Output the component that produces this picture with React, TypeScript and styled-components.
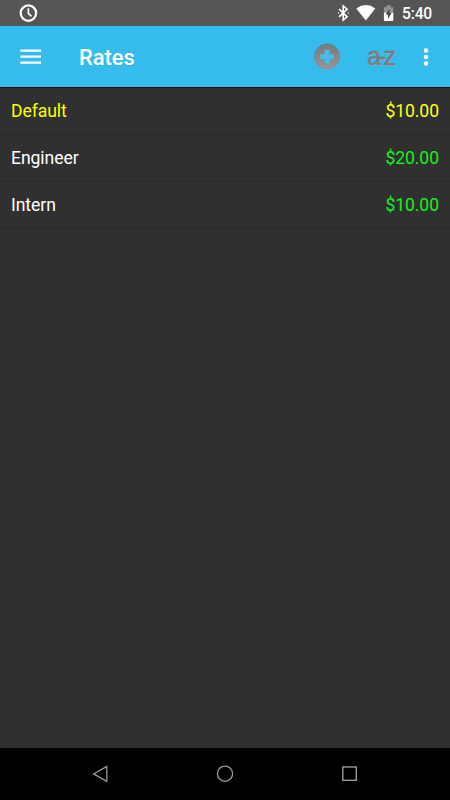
import React from "react";
import styled, { createGlobalStyle } from "styled-components";

const GlobalStyle = createGlobalStyle`
  body { margin: 0; background: #303030; }
  * { box-sizing: border-box; }
  svg { display: block; flex: none; }
`;

const Screen = styled.div`
  display: flex;
  flex-direction: column;
  width: 450px;
  height: 800px;
  background: #303030;
  font-family: Roboto, sans-serif;
  overflow: hidden;
`;

const StatusBar = styled.header`
  display: flex;
  align-items: center;
  justify-content: space-between;
  height: 26px;
  padding: 0 18px 0 19px;
  background: #555555;
`;

const StatusIcons = styled.div`
  display: flex;
  align-items: center;
  height: 26px;
`;

const Clock = styled.span`
  margin-left: 8px;
  padding-top: 2px;
  color: #fff;
  font-size: 15.6px;
  font-weight: 500;
  letter-spacing: -0.2px;
  line-height: 24px;
`;

const AppBar = styled.div`
  display: flex;
  align-items: center;
  height: 62px;
  padding: 0 21px 0 20px;
  background: #36bbed;
  border-bottom: 1px solid #1b0d0d;
`;

const Title = styled.h1`
  flex: 1;
  margin: 0 0 0 38px;
  padding-top: 2px;
  color: #fff;
  font-size: 21.9px;
  font-weight: 500;
  line-height: 28px;
`;

const IconButton = styled.button<{ $gap?: number }>`
  display: flex;
  margin: 0 0 0 ${(p) => p.$gap ?? 0}px;
  padding: 0;
  border: 0;
  background: none;
`;

const RateList = styled.ul`
  flex: 1;
  margin: 0;
  padding: 0;
  list-style: none;
`;

const RateRow = styled.li`
  display: flex;
  align-items: center;
  justify-content: space-between;
  height: 46.8px;
  padding: 1px 11px 0;
  border-bottom: 1px solid #292929;
  font-size: 17.6px;
  letter-spacing: -0.08px;
  line-height: 24px;
`;

const Name = styled.span<{ $active: boolean }>`
  color: ${(p) => (p.$active ? "#ffff00" : "#ffffff")};
`;

const Amount = styled.span<{ $active: boolean }>`
  color: ${(p) => (p.$active ? "#ffff20" : "#12f31a")};
`;

const NavBar = styled.nav`
  display: flex;
  align-items: center;
  justify-content: space-between;
  height: 52px;
  padding: 0 92px;
  background: #000;
`;

const rates = [
  { name: "Default", amount: "$10.00", active: true },
  { name: "Engineer", amount: "$20.00", active: false },
  { name: "Intern", amount: "$10.00", active: false },
];

const ClockIcon = () => (
  <svg width="19" height="26" viewBox="0 0 19 26" fill="none" stroke="#fff">
    <circle cx="9.4" cy="13.1" r="7.7" strokeWidth="2.3" />
    <path d="M9.4 8.2v5.1l3.1 3" strokeWidth="1.7" />
  </svg>
);

const SystemIcons = () => (
  <svg width="58" height="26" viewBox="336.5 0 58 26">
    <path
      d="M339.6 9.2l8 7.6-3.9 3.2V6l3.9 3.2-8 7.6"
      fill="none"
      stroke="#fff"
      strokeWidth="1.6"
    />
    <path d="M338.6 13h.9M348.2 13h1" stroke="#fff" strokeWidth="1.3" />
    <path d="M356.8 8.5Q366.3 1.6 375.8 8.5L366.3 20.4Z" fill="#fff" />
    <path d="M384.4 7.2h2.6V5.2h4.2v2h2.6V13h-9.4z" fill="#929292" />
    <path d="M384.4 12.8h9.4V20q0 .9-.9.9h-7.6q-.9 0-.9-.9z" fill="#fff" />
    <path d="M390 8.5l-3.8 6.2h2.3V19l3.7-6.3H390z" fill="#454545" />
  </svg>
);

const MenuIcon = () => (
  <svg width="21" height="20" viewBox="0 0 21 20" fill="#fff">
    <path d="M.3 2.5H21v2.2H.3zM.3 8.6H21v2.2H.3zM.3 14.6H21v2.2H.3z" />
  </svg>
);

const AddIcon = () => (
  <svg width="28" height="28" viewBox="0 0 28 28">
    <defs>
      <linearGradient id="metal" x2="0" y2="1">
        <stop offset="0" stopColor="#7b7b7b" />
        <stop offset="1" stopColor="#959595" />
      </linearGradient>
    </defs>
    <circle cx="14" cy="14" r="12.7" fill="#87aebe" />
    <circle cx="14" cy="13.4" r="12.7" fill="#66777e" />
    <circle cx="14" cy="13.8" r="12.2" fill="url(#metal)" />
    <path
      d="M11.6 7h4.8v4.4h4.4v4.8h-4.4v4.4h-4.8v-4.4H7.2v-4.8h4.4z"
      fill="#3fc2f2"
      stroke="#70a0b4"
      strokeWidth=".5"
    />
  </svg>
);

const SortLabel = styled.span`
  display: block;
  width: 28px;
  height: 28px;
  color: #777d80;
  font: 400 25px/27px "Liberation Sans", Arial, sans-serif;
  letter-spacing: -2.9px;
  white-space: nowrap;
  text-shadow: 0 1px 0 #94b1bd;
  -webkit-text-stroke: 0.4px #777d80;
`;

const MoreIcon = () => (
  <svg width="6" height="20" viewBox="0 0 6 20" fill="#fff">
    <circle cx="3" cy="3.4" r="2.25" />
    <circle cx="3" cy="10" r="2.25" />
    <circle cx="3" cy="16.5" r="2.25" />
  </svg>
);

export default function App() {
  return (
    <Screen>
      <GlobalStyle />
      <StatusBar>
        <ClockIcon />
        <StatusIcons>
          <SystemIcons />
          <Clock>5:40</Clock>
        </StatusIcons>
      </StatusBar>
      <AppBar>
        <IconButton aria-label="Menu"><MenuIcon /></IconButton>
        <Title>Rates</Title>
        <IconButton aria-label="Add rate"><AddIcon /></IconButton>
        <IconButton $gap={25} aria-label="Sort"><SortLabel>a-z</SortLabel></IconButton>
        <IconButton $gap={29} aria-label="More options"><MoreIcon /></IconButton>
      </AppBar>
      <RateList>
        {rates.map((r) => (
          <RateRow key={r.name}>
            <Name $active={r.active}>{r.name}</Name>
            <Amount $active={r.active}>{r.amount}</Amount>
          </RateRow>
        ))}
      </RateList>
      <NavBar>
        <svg width="18" height="20" viewBox="0 0 18 20" fill="none" stroke="#999" strokeWidth="1.3">
          <path d="M14.8 2.4v15L1.7 9.9z" />
        </svg>
        <svg width="18" height="20" viewBox="0 0 18 20" fill="none" stroke="#999" strokeWidth="1.3">
          <circle cx="9" cy="9.7" r="7.6" />
        </svg>
        <svg width="18" height="20" viewBox="0 0 18 20" fill="none" stroke="#999" strokeWidth="1.4">
          <rect x="2.8" y="3" width="13.5" height="13.3" />
        </svg>
      </NavBar>
    </Screen>
  );
}
